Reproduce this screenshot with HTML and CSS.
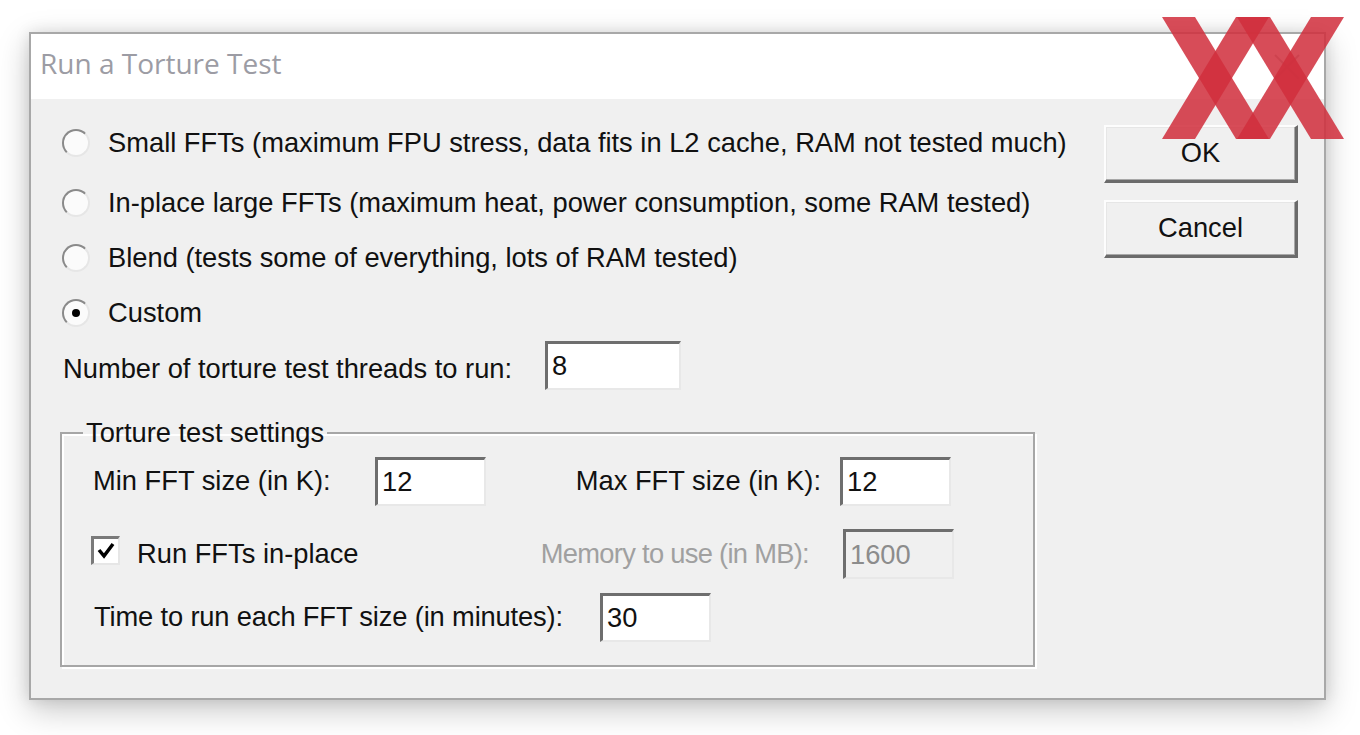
FILE: index.html
```html
<!DOCTYPE html>
<html>
<head>
<meta charset="utf-8">
<title>Run a Torture Test</title>
<link rel="stylesheet" href="styles.css">
</head>
<body>
<div class="dialog">
  <div class="titlebar">
    <span class="title">Run a Torture Test</span>
    <svg class="close" width="30" height="30" viewBox="0 0 30 30"><path d="M3 3 L27 27 M27 3 L3 27" stroke="#8a8a8a" stroke-width="2" fill="none"/></svg>
  </div>
  <div class="body">
    <div class="left">
      <div class="row radio-row first"><span class="radio"></span><span class="lbl">Small FFTs (maximum FPU stress, data fits in L2 cache, RAM not tested much)</span></div>
      <div class="row radio-row gap20"><span class="radio"></span><span class="lbl">In-place large FFTs (maximum heat, power consumption, some RAM tested)</span></div>
      <div class="row radio-row gap15"><span class="radio"></span><span class="lbl">Blend (tests some of everything, lots of RAM tested)</span></div>
      <div class="row radio-row gap15"><span class="radio checked"></span><span class="lbl">Custom</span></div>
      <div class="row threads-row"><span class="threads-lbl">Number of torture test threads to run:</span><span class="edit w136">8</span></div>
      <fieldset class="group">
        <legend>Torture test settings</legend>
        <div class="grow r1">
          <span class="glbl c1">Min FFT size (in K):</span>
          <span class="edit w111">12</span>
          <span class="glbl c3 ralign">Max FFT size (in K):</span>
          <span class="edit w111">12</span>
        </div>
        <div class="grow r2">
          <span class="checkwrap"><span class="checkbox"><svg width="20" height="20" viewBox="0 0 20 20"><path d="M3 9 L8 15 L17 3" stroke="#000" stroke-width="3.5" fill="none"/></svg></span><span class="lbl">Run FFTs in-place</span></span>
          <span class="glbl c3 ralign disabled mem">Memory to use (in MB):</span>
          <span class="edit w111 dis">1600</span>
        </div>
        <div class="grow r3">
          <span class="time-lbl">Time to run each FFT size (in minutes):</span>
          <span class="edit w111">30</span>
        </div>
      </fieldset>
    </div>
    <div class="buttons">
      <button class="btn">OK</button>
      <button class="btn">Cancel</button>
    </div>
  </div>
  <svg class="logo" width="182" height="122" viewBox="0 0 182 122">
    <g fill="#d02e3d" fill-opacity="0.86">
      <polygon points="0,0 33,0 107,122 74,122"/>
      <polygon points="74,0 107,0 33,122 0,122"/>
      <polygon points="75,0 108,0 182,122 149,122"/>
      <polygon points="149,0 182,0 108,122 75,122"/>
    </g>
  </svg>
</div>
</body>
</html>
```
FILE: styles.css
```css
html, body {
  margin: 0;
  padding: 0;
  background: #ffffff;
}
body {
  width: 1360px;
  height: 735px;
  overflow: hidden;
  font-family: "Liberation Sans", Arial, sans-serif;
  font-size: 27.3px;
  color: #111;
}
.dialog {
  position: relative;
  margin: 32px 0 0 29px;
  width: 1297px;
  height: 668px;
  box-sizing: border-box;
  border: 2px solid #a8a8a8;
  background: #f0f0f0;
  box-shadow: 0 10px 30px rgba(0,0,0,0.22), 0 0 14px rgba(0,0,0,0.10);
  display: flex;
  flex-direction: column;
}
.titlebar {
  height: 65px;
  background: #fff;
  display: flex;
  align-items: center;
  justify-content: space-between;
  padding: 0 22px 0 9px;
  flex: none;
}
.title {
  font-family: "Open Sans", "Noto Sans", sans-serif;
  font-size: 28px;
  color: #9c9ca4;
  margin-top: -8px;
}
.close { opacity: 0.6; }
.body {
  flex: 1;
  display: flex;
}
.left {
  flex: 1;
  padding-left: 31px;
  display: flex;
  flex-direction: column;
}
.buttons {
  width: 194px;
  margin-right: 26px;
  padding-top: 26px;
  display: flex;
  flex-direction: column;
  gap: 17px;
}
.btn {
  width: 194px;
  height: 58px;
  font-family: "Liberation Sans", Arial, sans-serif;
  font-size: 27.3px;
  color: #111;
  background: #f0f0f0;
  border-style: solid;
  border-width: 2px 3px 3px 2px;
  border-color: #fdfdfd #6b6b6b #6b6b6b #fdfdfd;
  box-shadow: inset -1px -1px 0 #a8a8a8, inset 1px 1px 0 #e6e6e6;
  padding: 0 0 2px;
}
.row {
  display: flex;
  align-items: center;
}
.radio-row { height: 40px; }
.radio-row.first { margin-top: 24px; }
.gap20 { margin-top: 20px; }
.gap15 { margin-top: 15px; }
.radio {
  width: 24px;
  height: 24px;
  border-radius: 50%;
  border: 2px solid;
  border-color: #8a8a8a #e6e6e6 #e6e6e6 #8a8a8a;
  background: #fbfbfb;
  margin-right: 18px;
  flex: none;
  position: relative;
}
.radio.checked::after {
  content: "";
  position: absolute;
  width: 8px;
  height: 8px;
  border-radius: 50%;
  background: #000;
  left: 8px;
  top: 8px;
}
.lbl { white-space: nowrap; }
.threads-row {
  height: 50px;
  margin-top: 7px;
}
.threads-lbl {
  width: 483px;
  flex: none;
  padding: 8px 0 0 1px;
  box-sizing: border-box;
  white-space: nowrap;
}
.edit {
  box-sizing: border-box;
  height: 49px;
  background: #fff;
  border-style: solid;
  border-width: 3px 2px 2px 3px;
  border-color: #6e6e6e #e8e8e8 #e8e8e8 #6e6e6e;
  padding-left: 4px;
  display: flex;
  align-items: center;
  flex: none;
  white-space: nowrap;
}
.w136 { width: 136px; }
.w111 { width: 111px; }
.edit.dis {
  background: #f0f0f0;
  color: #8c8c8c;
  height: 50px;
  margin-left: 3px;
}
.group {
  margin: 28px 0 0 -2px;
  width: 975px;
  box-sizing: border-box;
  padding: 0 0 23px 31px;
  border: 2px solid #a6a6a6;
  box-shadow: inset 2px 2px 0 #fff, 2px 2px 0 #fff;
}
.group legend {
  font-size: 27.3px;
  line-height: 30px;
  padding: 0 3px;
  margin-left: -10px;
}
.grow {
  display: flex;
  align-items: center;
  height: 50px;
}
.c1 { width: 282px; flex: none; white-space: nowrap; }
.c3 { width: 354px; flex: none; white-space: nowrap; }
.r1 { margin-top: 8px; }
.r2 { margin-top: 23px; }
.r2 .checkwrap { width: 393px; flex: none; }
.r3 { margin-top: 13px; }
.ralign {
  text-align: right;
  padding-right: 19px;
  box-sizing: border-box;
}
.mem { padding-right: 31px; letter-spacing: -0.7px; }
.disabled { color: #a0a0a0; }
.checkwrap {
  display: flex;
  align-items: center;
}
.checkbox {
  width: 29px;
  height: 29px;
  box-sizing: border-box;
  background: #fff;
  border-style: solid;
  border-width: 3px 2px 2px 3px;
  border-color: #7a7a7a #e6e6e6 #e6e6e6 #7a7a7a;
  display: flex;
  align-items: center;
  justify-content: center;
  margin: -8px 17px 0 -2px;
}
.time-lbl {
  width: 507px;
  flex: none;
  padding-left: 1px;
  box-sizing: border-box;
  white-space: nowrap;
  letter-spacing: -0.15px;
}
.logo {
  position: absolute;
  left: 1131px;
  top: -17px;
}
```
